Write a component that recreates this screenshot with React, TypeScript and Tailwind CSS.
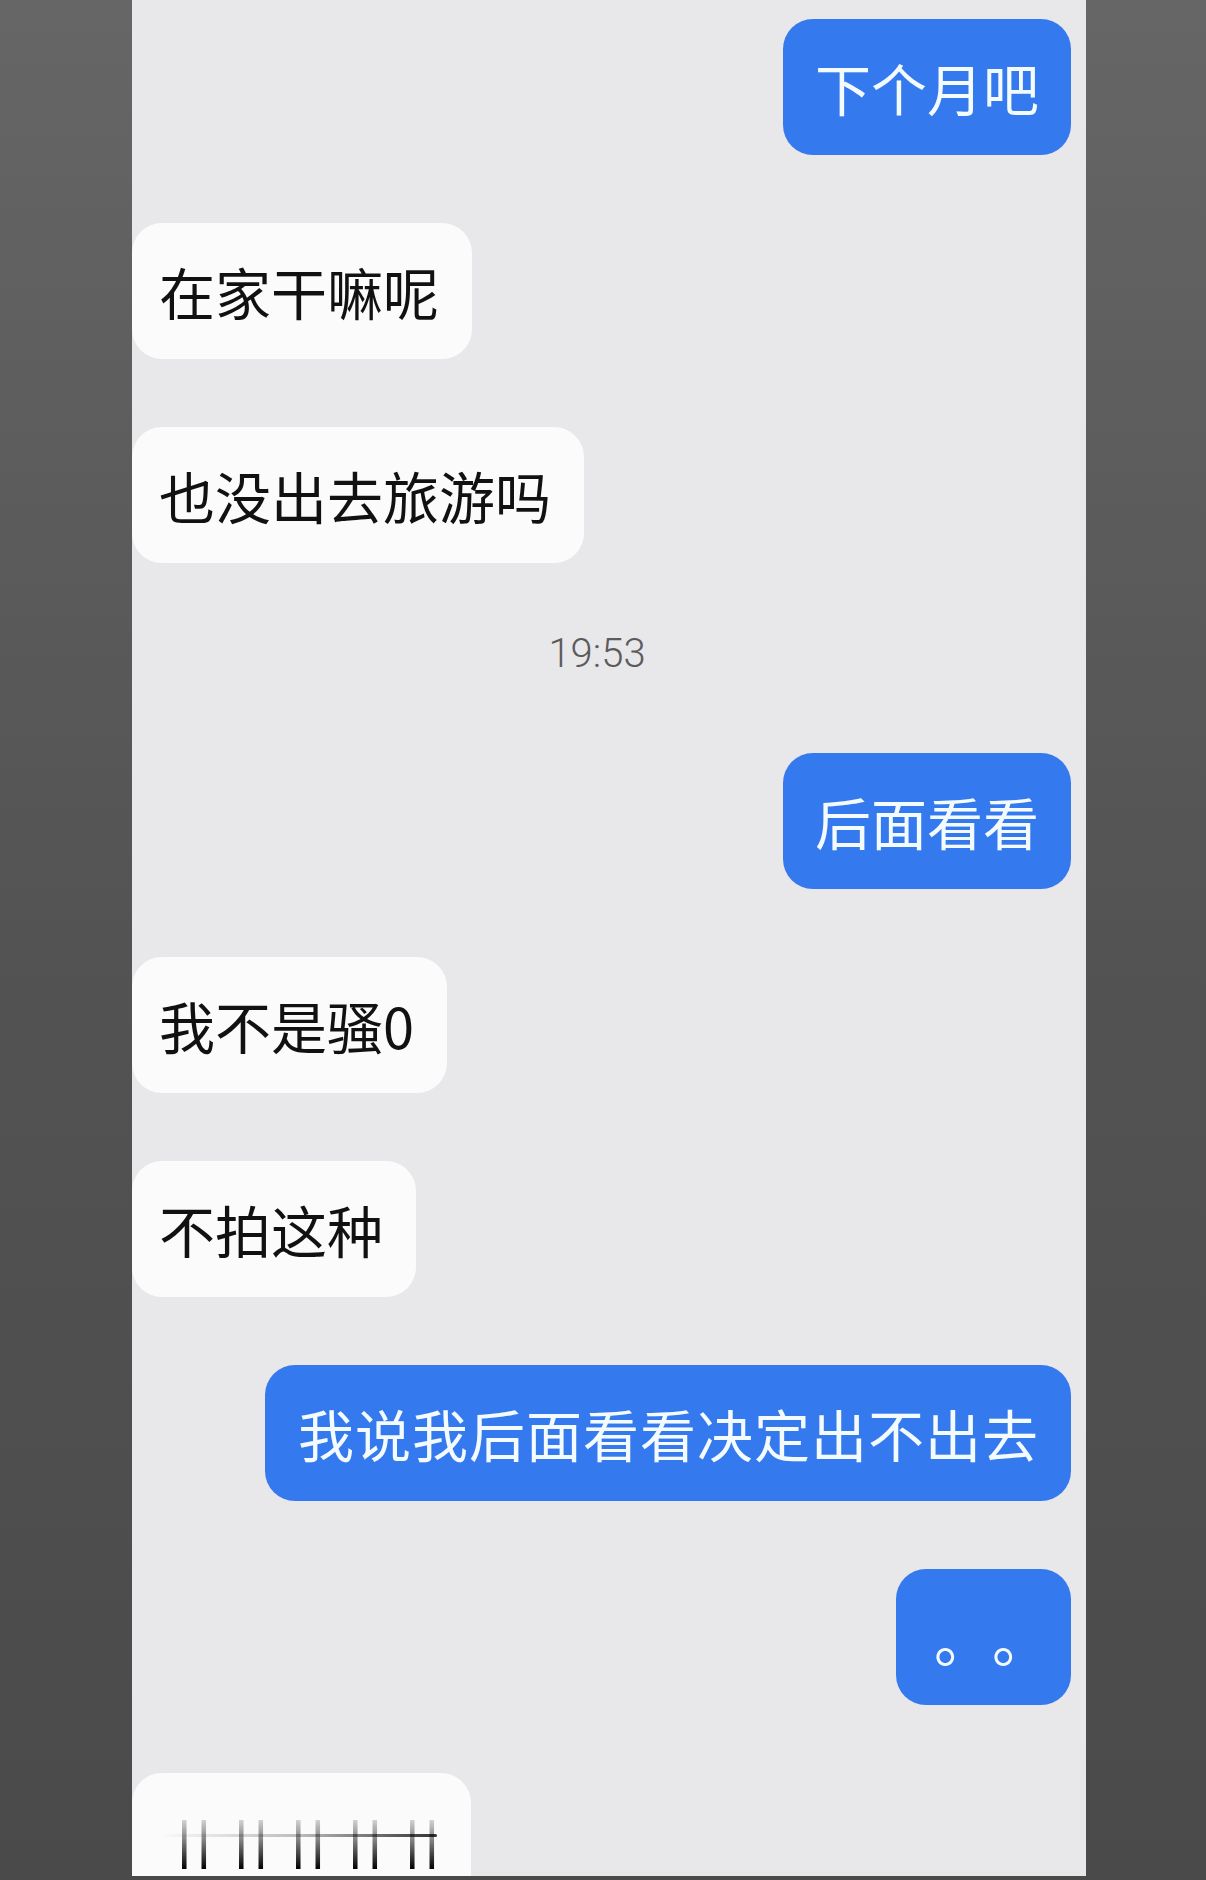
import React from "react";

const cjk = { fontFamily: '"Noto Sans CJK SC", "Noto Sans", sans-serif' };

function Left({ children }: { children: React.ReactNode }) {
  return (
    <div
      className="self-start shrink-0 mt-[68px] h-[136px] flex items-center pl-[27px] pr-[33px] rounded-[30px] bg-[#fbfbfc] text-[#111111] text-[56px] leading-none whitespace-nowrap"
      style={cjk}
    >
      {children}
    </div>
  );
}

function Right({
  children,
  first,
  pad = "px-[32px]",
  wide,
}: {
  children: React.ReactNode;
  first?: boolean;
  pad?: string;
  wide?: boolean;
}) {
  return (
    <div
      className={
        (first ? "mt-0 " : "mt-[68px] ") +
        (wide ? "tracking-[1px] " : "") +
        pad +
        " self-end shrink-0 mr-[15px] h-[136px] flex items-center rounded-[30px] bg-[#3579ee] text-[#f3fbff] text-[56px] leading-none whitespace-nowrap"
      }
      style={cjk}
    >
      {children}
    </div>
  );
}

export default function App() {
  return (
    <div className="w-[1206px] h-[1880px] overflow-hidden bg-gradient-to-b from-[#666666] via-[#535353] to-[#4a4a4a] flex items-start">
      <div className="ml-[132px] w-[954px] h-[1876px] overflow-hidden bg-[#e8e7ea] flex flex-col pt-[19px]">
        <Right first>下个月吧</Right>
        <Left>在家干嘛呢</Left>
        <Left>也没出去旅游吗</Left>

        <div
          className="shrink-0 mt-[66px] h-[50px] leading-[50px] text-[40px] text-[#5b5b5b] text-center pr-[24px]"
          style={{ fontFamily: 'Roboto, "Noto Sans", sans-serif', fontWeight: 300 }}
        >
          19:53
        </div>

        <div className="shrink-0 mt-[6px]" />
        <Right>后面看看</Right>
        <Left>我不是骚0</Left>
        <Left>不拍这种</Left>
        <Right wide pad="pl-[33px] pr-[32px]">我说我后面看看决定出不出去</Right>
        <Right pad="pl-[38px] pr-[21px]">
          <span className="flex">
            <span className="inline-block w-[58px] text-[58px] leading-none">。</span>
            <span className="inline-block w-[58px] text-[58px] leading-none">。</span>
          </span>
        </Right>

        <div className="self-start shrink-0 mt-[68px] relative w-[339px] h-[136px] flex items-center pl-[45px] rounded-[30px] bg-[#fbfbfc]">
          {["||", "||", "||", "||", "||"].map((t, i) => (
            <span
              key={i}
              className="inline-block w-[57px] text-[56px] leading-none tracking-[5px] bg-gradient-to-b from-black/5 via-black/50 to-black bg-clip-text text-transparent"
              style={{ fontFamily: '"Liberation Sans", Arial, sans-serif' }}
            >
              {t}
            </span>
          ))}
          <div className="absolute left-[28px] top-[61px] w-[277px] h-[3px] rounded-full bg-gradient-to-r from-transparent via-black/25 to-black/80" />
        </div>
      </div>
    </div>
  );
}
